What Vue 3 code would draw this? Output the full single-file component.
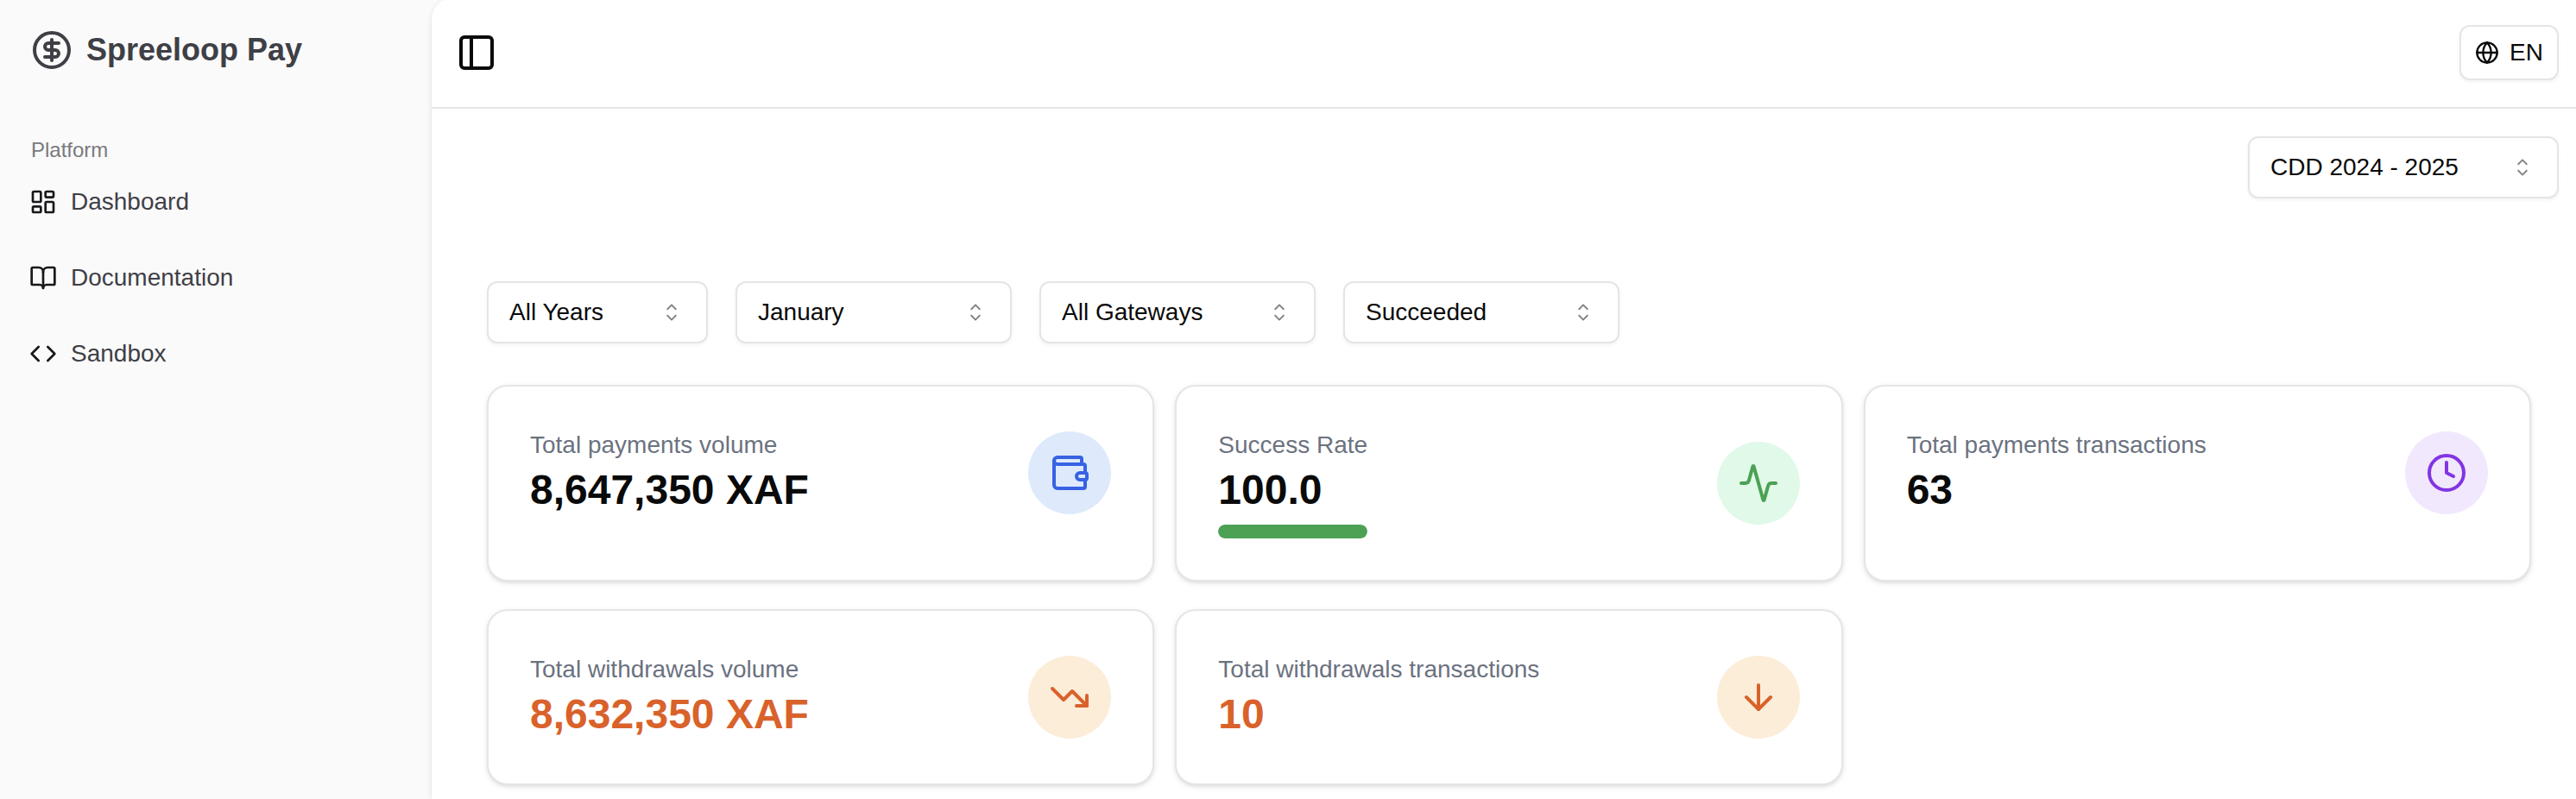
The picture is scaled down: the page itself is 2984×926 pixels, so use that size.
<script setup>
import { ref } from 'vue'

const navItems = [
  {
    label: 'Dashboard',
    paths: [
      'M4 3h5a1 1 0 0 1 1 1v7a1 1 0 0 1-1 1H4a1 1 0 0 1-1-1V4a1 1 0 0 1 1-1z',
      'M15 3h5a1 1 0 0 1 1 1v3a1 1 0 0 1-1 1h-5a1 1 0 0 1-1-1V4a1 1 0 0 1 1-1z',
      'M15 12h5a1 1 0 0 1 1 1v7a1 1 0 0 1-1 1h-5a1 1 0 0 1-1-1v-7a1 1 0 0 1 1-1z',
      'M4 16h5a1 1 0 0 1 1 1v3a1 1 0 0 1-1 1H4a1 1 0 0 1-1-1v-3a1 1 0 0 1 1-1z',
    ],
  },
  {
    label: 'Documentation',
    paths: [
      'M12 7v14',
      'M3 18a1 1 0 0 1-1-1V4a1 1 0 0 1 1-1h5a4 4 0 0 1 4 4 4 4 0 0 1 4-4h5a1 1 0 0 1 1 1v13a1 1 0 0 1-1 1h-6a3 3 0 0 0-3 3 3 3 0 0 0-3-3z',
    ],
  },
  { label: 'Sandbox', paths: ['m16 18 6-6-6-6', 'm8 6-6 6 6 6'] },
]

const project = ref('CDD 2024 - 2025')

const filters = ref([
  { name: 'Year', value: 'All Years', size: 'narrow' },
  { name: 'Month', value: 'January', size: 'wide' },
  { name: 'Gateway', value: 'All Gateways', size: 'wide' },
  { name: 'Status', value: 'Succeeded', size: 'wide' },
])

const stats = [
  {
    label: 'Total payments volume',
    value: '8,647,350 XAF',
    tone: 'blue',
    paths: [
      'M19 7V4a1 1 0 0 0-1-1H5a2 2 0 0 0 0 4h15a1 1 0 0 1 1 1v4h-3a2 2 0 0 0 0 4h3a1 1 0 0 0 1-1v-2a1 1 0 0 0-1-1',
      'M3 5v14a2 2 0 0 0 2 2h15a1 1 0 0 0 1-1v-4',
    ],
  },
  {
    label: 'Success Rate',
    value: '100.0',
    tone: 'green',
    progress: 100,
    paths: [
      'M22 12h-2.48a2 2 0 0 0-1.93 1.46l-2.35 8.36a.25.25 0 0 1-.48 0L9.24 2.18a.25.25 0 0 0-.48 0l-2.35 8.36A2 2 0 0 1 4.49 12H2',
    ],
  },
  {
    label: 'Total payments transactions',
    value: '63',
    tone: 'purple',
    paths: ['M22 12a10 10 0 1 1-20 0 10 10 0 0 1 20 0z', 'M12 6v6l4 2'],
  },
  {
    label: 'Total withdrawals volume',
    value: '8,632,350 XAF',
    tone: 'orange',
    accent: true,
    paths: ['M16 17h6v-6', 'm22 17-8.5-8.5-5 5L2 7'],
  },
  {
    label: 'Total withdrawals transactions',
    value: '10',
    tone: 'orange',
    accent: true,
    paths: ['M12 5v14', 'm19 12-7 7-7-7'],
  },
]

const caret =
  'M4.93179 5.43179C4.75605 5.60753 4.75605 5.89245 4.93179 6.06819C5.10753 6.24392 5.39245 6.24392 5.56819 6.06819L7.49999 4.13638L9.43179 6.06819C9.60753 6.24392 9.89245 6.24392 10.0682 6.06819C10.2439 5.89245 10.2439 5.60753 10.0682 5.43179L7.81819 3.18179C7.73379 3.0974 7.61933 3.04999 7.49999 3.04999C7.38064 3.04999 7.26618 3.0974 7.18179 3.18179L4.93179 5.43179ZM10.0682 9.56819C10.2439 9.39245 10.2439 9.10753 10.0682 8.93179C9.89245 8.75606 9.60753 8.75606 9.43179 8.93179L7.49999 10.8636L5.56819 8.93179C5.39245 8.75606 5.10753 8.75606 4.93179 8.93179C4.75605 9.10753 4.75605 9.39245 4.93179 9.56819L7.18179 11.8182C7.35753 11.9939 7.64245 11.9939 7.81819 11.8182L10.0682 9.56819Z'
</script>

<template>
  <div class="app">
    <aside class="sidebar">
      <a class="brand" href="#">
        <svg class="icon icon-lg" viewBox="0 0 24 24" aria-hidden="true">
          <circle cx="12" cy="12" r="10" />
          <path d="M16 8h-6a2 2 0 1 0 0 4h4a2 2 0 1 1 0 4H8" />
          <path d="M12 18V6" />
        </svg>
        <span>Spreeloop Pay</span>
      </a>
      <nav class="nav" aria-labelledby="nav-title">
        <div id="nav-title" class="nav-title">Platform</div>
        <ul class="nav-list">
          <li v-for="item in navItems" :key="item.label">
            <a class="nav-link" href="#">
              <svg class="icon nav-icon" viewBox="0 0 24 24" aria-hidden="true">
                <path v-for="d in item.paths" :key="d" :d="d" />
              </svg>
              <span>{{ item.label }}</span>
            </a>
          </li>
        </ul>
      </nav>
    </aside>

    <main class="main">
      <header class="header">
        <button class="toggle" type="button" aria-label="Toggle sidebar">
          <svg class="icon icon-lg" viewBox="0 0 24 24" aria-hidden="true">
            <rect x="3" y="3" width="18" height="18" rx="2" />
            <path d="M9 3v18" />
          </svg>
        </button>
        <button class="language" type="button">
          <svg class="icon language-icon" viewBox="0 0 24 24" aria-hidden="true">
            <circle cx="12" cy="12" r="10" />
            <path d="M12 2a14.5 14.5 0 0 0 0 20 14.5 14.5 0 0 0 0-20" />
            <path d="M2 12h20" />
          </svg>
          <span>EN</span>
        </button>
      </header>

      <div class="project-row">
        <div class="picker picker-project">
          <select v-model="project" aria-label="Project">
            <option>CDD 2024 - 2025</option>
          </select>
          <svg class="caret" viewBox="0 0 15 15" aria-hidden="true"><path :d="caret" /></svg>
        </div>
      </div>

      <div class="filters">
        <div v-for="f in filters" :key="f.name" class="picker" :class="`picker-${f.size}`">
          <select v-model="f.value" :aria-label="f.name">
            <option>{{ f.value }}</option>
          </select>
          <svg class="caret" viewBox="0 0 15 15" aria-hidden="true"><path :d="caret" /></svg>
        </div>
      </div>

      <section class="stats">
        <article v-for="s in stats" :key="s.label" class="card">
          <div class="card-text">
            <p class="card-label">{{ s.label }}</p>
            <p class="card-value" :class="{ accent: s.accent }">{{ s.value }}</p>
            <div
              v-if="s.progress"
              class="track"
              role="progressbar"
              :aria-label="s.label"
              :aria-valuenow="s.progress"
              aria-valuemin="0"
              aria-valuemax="100"
            >
              <div class="bar" :style="{ width: s.progress + '%' }"></div>
            </div>
          </div>
          <div class="badge" :class="s.tone">
            <svg class="icon icon-lg" viewBox="0 0 24 24" aria-hidden="true">
              <path v-for="d in s.paths" :key="d" :d="d" />
            </svg>
          </div>
        </article>
      </section>
    </main>
  </div>
</template>

<style>
body {
  margin: 0;
  background: #fafafa;
}
</style>

<style scoped>
.app {
  display: flex;
  min-height: 100vh;
  overflow: hidden;
  background: #fafafa;
  color: #0a0a0a;
  font-family: "Liberation Sans", Arial, Helvetica, sans-serif;
  font-size: 28px;
  line-height: 40px;
}

.app *,
.app {
  box-sizing: border-box;
}

.icon {
  flex: none;
  display: block;
  fill: none;
  stroke: currentColor;
  stroke-width: 2;
  stroke-linecap: round;
  stroke-linejoin: round;
}

.icon-lg {
  width: 48px;
  height: 48px;
}

.sidebar {
  flex: 0 0 500px;
  padding: 34px 36px;
  color: #3f3f46;
}

.brand {
  display: flex;
  align-items: center;
  gap: 16px;
  color: inherit;
  font-size: 36px;
  font-weight: 700;
  line-height: 48px;
  text-decoration: none;
}

.nav {
  margin-top: 76px;
}

.nav-title {
  color: #79797e;
  font-size: 24px;
  line-height: 32px;
}

.nav-list {
  display: flex;
  flex-direction: column;
  gap: 24px;
  margin: 12px 0 0;
  padding: 0;
  list-style: none;
}

.nav-link {
  display: flex;
  align-items: center;
  gap: 16px;
  height: 64px;
  margin-left: -2px;
  color: inherit;
  text-decoration: none;
}

.nav-icon {
  width: 32px;
  height: 32px;
  color: #18181b;
}

.main {
  flex: 1;
  min-width: 0;
  margin-top: -2px;
  padding-bottom: 16px;
  border-top-left-radius: 24px;
  background: #fff;
  box-shadow: 0 2px 6px rgba(0, 0, 0, 0.1), 0 2px 4px -2px rgba(0, 0, 0, 0.1);
}

.header {
  display: flex;
  align-items: center;
  justify-content: space-between;
  height: 128px;
  padding: 0 20px 0 28px;
  border-bottom: 2px solid #e5e5e5;
}

button {
  color: inherit;
  font: inherit;
}

.toggle {
  padding: 0;
  border: 0;
  background: none;
}

.language {
  display: flex;
  align-items: center;
  gap: 12px;
  height: 64px;
  padding: 0 16px;
  border: 2px solid #e5e5e5;
  border-radius: 12px;
  background: #fff;
  box-shadow: 0 2px 4px rgba(0, 0, 0, 0.05);
}

.language-icon {
  width: 28px;
  height: 28px;
}

.project-row {
  display: flex;
  justify-content: flex-end;
  padding: 32px 20px 0;
}

.picker {
  display: grid;
  align-items: center;
}

.picker-project {
  width: 360px;
}

.picker-narrow {
  width: 256px;
}

.picker-wide {
  width: 320px;
}

.picker select {
  grid-area: 1 / 1;
  width: 100%;
  height: 72px;
  margin: 0;
  padding: 0 60px 0 24px;
  appearance: none;
  border: 2px solid #e5e5e5;
  border-radius: 12px;
  background: #fff;
  box-shadow: 0 2px 4px rgba(0, 0, 0, 0.05);
  color: inherit;
  font: inherit;
}

.caret {
  grid-area: 1 / 1;
  justify-self: end;
  width: 32px;
  height: 32px;
  margin-right: 26px;
  fill: currentColor;
  opacity: 0.5;
  pointer-events: none;
}

.filters {
  display: flex;
  flex-wrap: wrap;
  gap: 32px;
  padding: 96px 52px 0 64px;
}

.stats {
  display: grid;
  grid-template-columns: repeat(3, minmax(0, 1fr));
  gap: 32px 24px;
  padding: 48px 52px 0 64px;
}

.card {
  display: flex;
  align-items: flex-start;
  justify-content: space-between;
  padding: 48px;
  border: 2px solid #e5e5e5;
  border-radius: 24px;
  background: #fff;
  box-shadow: 0 2px 6px rgba(0, 0, 0, 0.1), 0 2px 4px -2px rgba(0, 0, 0, 0.1);
}

.card-label,
.card-value {
  margin: 0;
}

.card-label {
  color: #6b7280;
}

.card-value {
  font-size: 48px;
  font-weight: 700;
  line-height: 64px;
}

.accent {
  color: #d9622b;
}

.track {
  height: 16px;
  margin-top: 8px;
  overflow: hidden;
  border-radius: 8px;
  background: #e5e7eb;
}

.bar {
  height: 100%;
  border-radius: 8px;
  background: #4ca154;
}

.badge {
  flex: none;
  padding: 24px;
  border-radius: 50%;
}

/* Centres the badge on the height of its text block. */
.card-text:has(.track) + .badge {
  align-self: center;
}

.card-text:not(:has(.track)) + .badge {
  margin: 4px 0;
}

.blue {
  background: #dee9fc;
  color: #3662e3;
}

.green {
  background: #e1f9e8;
  color: #4ca154;
}

.purple {
  background: #f1e8fd;
  color: #8235e2;
}

.orange {
  background: #fcedd9;
  color: #d9622b;
}
</style>
